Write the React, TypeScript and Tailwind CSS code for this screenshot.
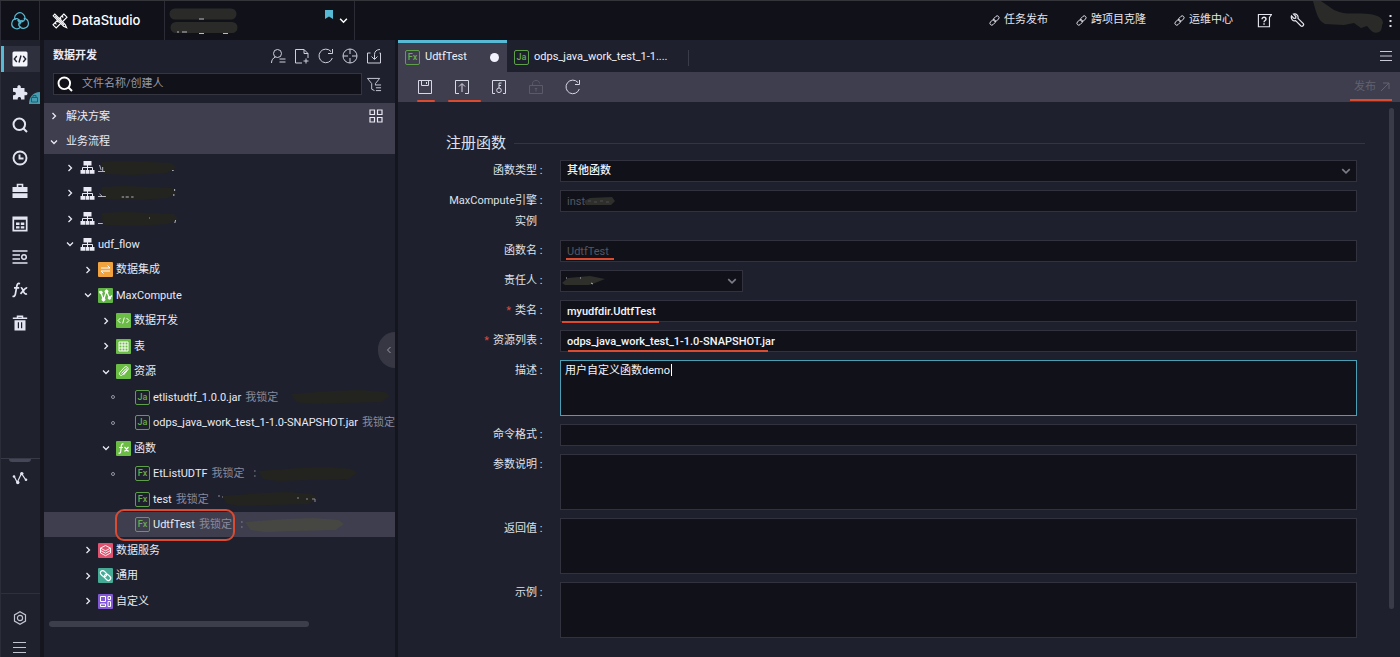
import type { ReactNode } from "react"
import { clsx } from "clsx"

const CYAN = "#57b9d3"

function Svg({ size = 16, box = 16, sw = 1, children }: { size?: number; box?: number; sw?: number; children: ReactNode }) {
  return (
    <svg
      width={size}
      height={size}
      viewBox={`0 0 ${box} ${box}`}
      fill="none"
      stroke="currentColor"
      strokeWidth={sw}
      className="shrink-0"
      aria-hidden="true"
    >
      {children}
    </svg>
  )
}

function Chevron({ open = false, size = 8 }: { open?: boolean; size?: number }) {
  return (
    <Svg size={size} box={8} sw={1.3}>
      <path d={open ? "M1 2.5l3 3 3-3" : "M2.5 1l3 3-3 3"} />
    </Svg>
  )
}

function LinkIcon({ size = 11 }: { size?: number }) {
  return (
    <Svg size={size} box={12} sw={1}>
      <rect x="4.4" y="2" width="7" height="4" rx="2" transform="rotate(-45 7.9 4)" />
      <rect x=".6" y="6" width="7" height="4" rx="2" transform="rotate(-45 4.1 8)" />
    </Svg>
  )
}

/* ---------- top bar ---------- */

const headerLinks = ["任务发布", "跨项目克隆", "运维中心"]
const lobe = "M4.3 8A5 5 0 1 1 12.8 8.8A4.8 4.8 0 0 1 7.2 9.2"

function TopBar() {
  return (
    <header className="flex h-10 shrink-0 items-stretch border-t border-[#34353b] bg-[#111219]">
      <div className="flex w-10 shrink-0 items-center justify-center border-r border-l border-[#2b2c35]">
        <svg width="18" height="18" viewBox="0 0 18 18" fill="none" stroke={CYAN} strokeWidth="1.2" aria-hidden="true">
          {[0, 120, 240].map((deg) => (
            <g key={deg} transform={`rotate(${deg} 9 9.6)`}>
              <path d={lobe} />
              <circle cx="7.2" cy="8.4" r=".9" fill={CYAN} stroke="none" />
            </g>
          ))}
        </svg>
      </div>
      <div className="flex w-[125px] shrink-0 items-center gap-1 border-r border-[#2b2c35] pt-px pl-3 text-white">
        <Svg size={16} box={16} sw={1.1}>
          <path d="M11.8 1L15 4.2 4.2 15 1 11.8z" />
          <path d="M9.8 3l1.5 1.5M7.8 5l1.5 1.5M5 7.8l1.5 1.5M3 9.8l1.5 1.5" />
          <path d="M1.2 2.8l1.6-1.6 10.4 10.4 1.3 2.9-2.9-1.3z" fill="#111219" strokeWidth="1.2" />
          <path d="M3.2 3.2l9 9" />
        </Svg>
        <h1 className="font-[Inter] text-[13px] font-medium">DataStudio</h1>
      </div>
      <button aria-label="切换工作空间" className="relative flex w-[190px] shrink-0 items-center border-r border-[#2b2c35] pl-1 text-white">
        <svg width="70" height="28" viewBox="0 0 70 28" aria-hidden="true">
          <path d="M6 7h56M7 20.5h56" stroke="#2a2a29" strokeWidth="11" strokeLinecap="round" />
          <path d="M30 12h5M8 25h2M13 25h5M30 26.5h5M54 26.5h5" stroke="#b9bac2" />
        </svg>
        <svg width="8" height="9" viewBox="0 0 8 9" className="mb-3 ml-auto" aria-hidden="true">
          <path d="M0 0h8v9L4 6.5 0 9z" fill={CYAN} />
        </svg>
        <span className="mr-1.5 ml-1.5">
          <Chevron open size={9} />
        </span>
      </button>
      <nav className="ml-auto flex items-center gap-7 text-[11px] text-[#e4e5ee]">
        {headerLinks.map((label) => (
          <a key={label} href="#" className="flex items-center gap-1">
            <LinkIcon />
            {label}
          </a>
        ))}
      </nav>
      <div className="ml-6 flex items-center gap-[18px] text-[#e4e5ee]">
        <button aria-label="帮助">
          <Svg size={15} sw={1.2}>
            <path d="M15.5 1.6H1.5v13h11.8V4.8z" />
            <path d="M5.4 6.6c0-2.8 4.2-2.6 4.2 0 0 1.4-2.1 1.4-2.1 3.2M7.5 11v1.4" strokeWidth="1.5" />
          </Svg>
        </button>
        <button aria-label="设置">
          <Svg size={15} sw={1.3}>
            <path d="M1.6 3.2l2.6 2.6 1.8-.3.3-1.8-2.5-2.5c2.8-.9 5.5 1.4 4.7 4.5l5.7 5.6c1.2 1.6-1 3.6-2.5 2.5L6 8.2C3.4 9.2.6 6.4 1.6 3.2z" />
          </Svg>
        </button>
      </div>
      <svg width="74" height="34" viewBox="0 0 74 34" className="ml-1.5" aria-hidden="true">
        <path
          d="M2 0h8l13 9c12 6 25 2 35 4 9 1 14 4 14 9-2 3 0 7-4 9-6 3-9-3-12-6l-6 2-7-5-10 2-19-1C6 19 5 10 2 0z"
          fill="#2a2a28"
        />
      </svg>
      <button aria-label="更多" className="mr-2 ml-1 flex items-center text-[#d6d7e0]">
        <svg width="3" height="14" viewBox="0 0 3 14" fill="currentColor" aria-hidden="true">
          <path d="M.5 1h2v2h-2zM.5 6h2v2h-2zM.5 11h2v2h-2z" />
        </svg>
      </button>
    </header>
  )
}

/* ---------- left rail ---------- */

const railItems: { label: string; icon: ReactNode }[] = [
  {
    label: "数据开发",
    icon: (
      <Svg>
        <rect x=".5" y=".5" width="15" height="15" rx="1.5" fill="#f4f5fb" stroke="none" />
        <path d="M4.8 5L2.3 8l2.5 3M11.2 5l2.5 3-2.5 3M9 4.5l-2 7" stroke="#20222e" strokeWidth="1.4" />
      </Svg>
    ),
  },
  {
    label: "组件",
    icon: (
      <Svg>
        <path
          d="M1 4h4.5C4.3.3 9.7.3 8.7 4H12.5v3.8c4-1 4 4.400 0 3.400V15.500H9c.8-3.500-4-3.500-3.200 0H1v-4.300c3.800.9 3.800-4.200 0-3.300z"
          fill="currentColor"
          stroke="none"
        />
      </Svg>
    ),
  },
  {
    label: "搜索",
    icon: (
      <Svg sw={2}>
        <circle cx="7.3" cy="7.3" r="5.8" />
        <path d="M11.5 11.5l3.5 3.5" />
      </Svg>
    ),
  },
  {
    label: "运行历史",
    icon: (
      <Svg sw={1.9}>
        <circle cx="8" cy="8" r="6.5" />
        <path d="M7.5 4.5v4h4" />
      </Svg>
    ),
  },
  {
    label: "手动任务",
    icon: (
      <Svg>
        <path d="M5.5 4V1.5h5V4" strokeWidth="1.6" />
        <path d="M.5 4h15v5H.5zM.5 10.2h15V15H.5z" fill="currentColor" stroke="none" />
      </Svg>
    ),
  },
  {
    label: "表管理",
    icon: (
      <Svg>
        <path d="M1.3 1.3h13.4v13.4H1.3zM1 3h14" strokeWidth="1.7" />
        <path d="M4 6.5h3.5V9H4zM8.8 6.5h3.5V9H8.8zM4 10.2h3.5v2.3H4zM8.8 10.2h3.5v2.3H8.8z" fill="currentColor" stroke="none" />
      </Svg>
    ),
  },
  {
    label: "公共表",
    icon: (
      <Svg sw={1.5}>
        <path d="M.5 2h15M.5 6h7.5M.5 10h7.5M.5 14h15" />
        <circle cx="12" cy="8" r="2.3" />
      </Svg>
    ),
  },
  {
    label: "函数列表",
    icon: (
      <Svg sw={1.7}>
        <path d="M8 1.8C5.8.8 5.2 2.2 4.8 4.2L3.4 12c-.4 2-1.2 2.7-2.9 2.2M2 5.8h5.2M8.8 6c2.4-1 2.2 7.5 6.2 5.8M15.2 6c-2-.6-3.2 2.4-6.7 5.8" />
      </Svg>
    ),
  },
  {
    label: "回收站",
    icon: (
      <Svg>
        <path d="M.8 3.3h14.4M5.5 3V1.2h5V3" strokeWidth="1.5" />
        <path d="M2.5 5.2h11V15.5h-11zM5.8 7.2v6h1.2v-6zM9 7.2v6h1.2v-6z" fill="currentColor" fillRule="evenodd" stroke="none" />
      </Svg>
    ),
  },
]

function Rail() {
  return (
    <aside className="flex w-10 shrink-0 flex-col items-stretch border-l border-[#2b2d38] bg-[#1f212d] pt-0.5 text-[#e4e5f2]">
      {railItems.map((item, i) => (
        <button key={item.label} aria-label={item.label} className="relative flex h-[33px] items-center">
          <span
            className={clsx(
              "flex h-[26px] w-full items-center justify-center",
              i === 0 ? "border-l-3 border-[#57b9d3] bg-[#2f303d] pr-1" : "pr-0.5"
            )}
          >
            {item.icon}
          </span>
          {i === 1 && (
            <svg width="11" height="12" viewBox="0 0 11 12" className="absolute right-0 bottom-1" aria-hidden="true">
              <path d="M0 12C0 5 4 0 11 0v12z" fill="#469db2" />
              <path d="M2.5 5.5h6v4.5h-6zM4 5.5V3.5h3v2" fill="none" stroke="#21606e" />
            </svg>
          )}
        </button>
      ))}
      <div className="mt-auto flex h-[135px] flex-col items-center border-t border-[#383a48] pr-0.5">
        <span className="h-[3px] w-[22px] rounded-b bg-[#454657]" />
        <button aria-label="血缘" className="mt-2">
          <Svg sw={1.2}>
            <path d="M2 6l3.2 6.5L9.500 3.500l4 6" />
            <g fill="currentColor" stroke="none">
              <circle cx="2" cy="6.5" r="1.3" />
              <circle cx="5.8" cy="12.5" r="1.7" />
              <circle cx="9.8" cy="3.6" r="1.7" />
              <circle cx="14" cy="9.8" r="1.3" />
            </g>
          </Svg>
        </button>
      </div>
      <div className="flex h-16 shrink-0 flex-col items-center gap-4 border-t border-[#2e303c] pt-[17px] pr-0.5 text-[#c3c4d1]">
        <button aria-label="偏好设置">
          <Svg size={14} box={14} sw={1.2}>
            <path d="M7 .8l5.5 3.1v6.2L7 13.2l-5.5-3.1V3.9z" />
            <circle cx="7" cy="7" r="2.6" />
          </Svg>
        </button>
        <button aria-label="展开菜单">
          <Svg size={13} box={13} sw={1.2}>
            <path d="M0 1.5h13M0 6.5h13M0 11.5h13" />
          </Svg>
        </button>
      </div>
    </aside>
  )
}

/* ---------- resource tree ---------- */

type IconKind = "flow" | "di" | "mc" | "code" | "table" | "clip" | "fn" | "svc" | "common" | "custom" | "Ja" | "Fx"

type Node = {
  label: string
  level: 1 | 2 | 3 | 4
  icon: IconKind
  state?: "open" | "closed" | "dot"
  locked?: boolean
  masked?: number
  marks?: string
  selected?: boolean
}

const nodes: Node[] = [
  { label: "", level: 1, icon: "flow", state: "closed", masked: 78, marks: "M0 11.5h9M2 5l2 5M6 7v4M95 10.5h2" },
  { label: "", level: 1, icon: "flow", state: "closed", masked: 79, marks: "M0 11.5h10M2 9l3 2M30 12h3M35 12h4M42 12h3M97 4v2M96 9v2" },
  { label: "", level: 1, icon: "flow", state: "closed", masked: 80, marks: "M0 12.5h6M64 7h1M97 9l-1 3" },
  { label: "udf_flow", level: 1, icon: "flow", state: "open" },
  { label: "数据集成", level: 2, icon: "di", state: "closed" },
  { label: "MaxCompute", level: 2, icon: "mc", state: "open" },
  { label: "数据开发", level: 3, icon: "code", state: "closed" },
  { label: "表", level: 3, icon: "table", state: "closed" },
  { label: "资源", level: 3, icon: "clip", state: "open" },
  { label: "etlistudtf_1.0.0.jar", level: 4, icon: "Ja", state: "dot", locked: true, masked: 104 },
  { label: "odps_java_work_test_1-1.0-SNAPSHOT.jar", level: 4, icon: "Ja", state: "dot", locked: true },
  { label: "函数", level: 3, icon: "fn", state: "open" },
  { label: "EtListUDTF", level: 4, icon: "Fx", state: "dot", locked: true, masked: 104, marks: "M1 5h1.5M1 10h1.5" },
  { label: "test", level: 4, icon: "Fx", locked: true, masked: 100, marks: "M1 5h2M5 6h1M80 7h2M89 8h2M95 8h3v3" },
  { label: "UdtfTest", level: 4, icon: "Fx", locked: true, masked: 104, marks: "M1 5h1.5M1 10h1.5", selected: true },
  { label: "数据服务", level: 2, icon: "svc", state: "closed" },
  { label: "通用", level: 2, icon: "common", state: "closed" },
  { label: "自定义", level: 2, icon: "custom", state: "closed" },
]

const indent = { 1: "pl-[22px]", 2: "pl-10", 3: "pl-[58px]", 4: "pl-[66px]" }

const tiles: Partial<Record<IconKind, { fill: string; glyph: ReactNode }>> = {
  di: { fill: "#f0a33f", glyph: <path d="M3 6h9L9.5 3.5M12 9H3l2.5 2.5" /> },
  mc: {
    fill: "#62b446",
    glyph: (
      <g>
        <path d="M1 3.5l2 1L5.5 12 8.5 3l3 7L14 7.5" strokeWidth="1.3" />
        <circle cx="3" cy="4.5" r="1.3" fill="#fff" />
        <circle cx="5.5" cy="11.5" r="1.5" fill="#fff" />
        <circle cx="8.5" cy="3.5" r="1.5" fill="#fff" />
        <circle cx="11.5" cy="10" r="1.3" fill="#fff" />
      </g>
    ),
  },
  code: { fill: "#6cbd45", glyph: <path d="M4.5 5L2 7.5 4.5 10M10.5 5L13 7.5 10.5 10M8.3 4.5l-1.6 6" /> },
  table: { fill: "#6cbd45", glyph: <path d="M3 3h9v9H3zM3 6h9M3 9h9M6 3v9M9 3v9" /> },
  clip: {
    fill: "#6cbd45",
    glyph: <path d="M5.5 9.5l4-4.5c1-1 2 0 1.2 1L6.5 10.8c-1.6 1.7-4.2-.5-2.7-2.3l4.4-5c2-2.2 5.3.4 3.4 2.7L7.5 11" />,
  },
  fn: {
    fill: "#6cbd45",
    glyph: <path d="M7.5 3c-1.8-.5-2 .8-2.2 2L4.7 10.5c-.2 1.6-.8 2-2.2 1.5M3.2 6.5H7M8.5 6l4 4.5M12.5 6l-4 4.5" strokeWidth="1.2" />,
  },
  svc: {
    fill: "#e0526f",
    glyph: <path d="M7.5 2.5l5 2.6-5 2.7-5-2.7zM2.5 7.5l5 2.7 5-2.7M2.5 10l5 2.7 5-2.7M2.5 5v5M12.5 5v5" strokeWidth=".9" />,
  },
  common: {
    fill: "#45ab97",
    glyph: (
      <g strokeWidth="1.2">
        <rect x="2" y="3.4" width="7" height="4.6" rx="2.3" transform="rotate(45 5.5 5.7)" />
        <rect x="6" y="7" width="7" height="4.6" rx="2.3" transform="rotate(45 9.5 9.3)" />
      </g>
    ),
  },
  custom: { fill: "#8258d6", glyph: <path d="M2.5 2.5h5v5h-5zM10 2.5h2.5v3H10zM10 7.5h2.5v5H10zM2.5 10h5v2.5h-5z" /> },
}

function FileBadge({ kind }: { kind: "Ja" | "Fx" }) {
  return (
    <span className="flex size-[15px] shrink-0 items-center justify-center rounded-xs border border-[#5f9f49] text-[9px] leading-none font-medium text-[#68ac4f]">
      {kind}
    </span>
  )
}

function NodeIcon({ kind }: { kind: IconKind }) {
  if (kind === "Ja" || kind === "Fx") return <FileBadge kind={kind} />
  if (kind === "flow") {
    return (
      <Svg size={15} box={15} sw={1}>
        <path d="M7.5 5v5M2.5 10V7.5h10V10" />
        <path d="M3.5 1h8v4.5h-8zM.5 10H5v3.8H.5zM5.5 10h4v3.8h-4zM10 10h4.5v3.8H10z" fill="currentColor" stroke="none" />
      </Svg>
    )
  }
  const tile = tiles[kind]
  if (!tile) return null
  return (
    <svg width="15" height="15" viewBox="0 0 15 15" fill="none" stroke="#fff" className="shrink-0" aria-hidden="true">
      <rect width="15" height="15" rx="1" fill={tile.fill} stroke="none" />
      {tile.glyph}
    </svg>
  )
}

function Mask({ node, width }: { node: Node; width: number }) {
  return (
    <svg width={width} height="16" viewBox="0 0 100 16" preserveAspectRatio="none" className="shrink-0" aria-hidden="true">
      <path
        d={
          node.locked
            ? "M5 5l40-3 25-1 25 2 5 4-8 6-38 1-30 1-14-2z"
            : "M4 2l30-1 30 1 30 1 6 5-12 5-40 2-40-1L6 11z"
        }
        fill={node.selected ? "#464742" : "#23241f"}
      />
      {node.marks && <path d={node.marks} fill="none" stroke={node.locked ? "#8a8c98" : "#c8c9d4"} />}
    </svg>
  )
}

function TreeRow({ node }: { node: Node }) {
  return (
    <li
      className={clsx("relative flex h-[25px] items-center even:h-[26px]", node.selected && "bg-[#3e3e4f]", indent[node.level])}
    >
      <button className="flex items-center whitespace-nowrap">
        <span className={clsx("mr-1.5 shrink-0", node.level === 4 ? "w-[19px]" : "w-2")}>
          {node.state === "dot" && <span className="ml-px block size-1 rounded-full border border-[#9495a2]" />}
          {(node.state === "open" || node.state === "closed") && <Chevron open={node.state === "open"} />}
        </span>
        <NodeIcon kind={node.icon} />
        <span className="ml-[3px] pt-0.5">{node.label}</span>
        {node.locked && <span className="ml-1 pt-0.5 text-[#878a9d]">我锁定</span>}
        {node.masked && (
          <span className={node.locked ? "ml-2" : ""}>
            <Mask node={node} width={node.masked} />
          </span>
        )}
      </button>
      {node.selected && (
        <span className="pointer-events-none absolute -top-[3px] left-[71px] h-8 w-[120px] rounded-[9px] border-2 border-[#dc4a30]" />
      )}
    </li>
  )
}

function RefreshGlyph() {
  return (
    <Svg>
      <path d="M14.3 10A6.8 6.8 0 1 1 13 3.5M14.5 1v4.500H10" />
    </Svg>
  )
}

const panelActions: { label: string; icon: ReactNode }[] = [
  {
    label: "只看我的",
    icon: (
      <Svg>
        <circle cx="7.5" cy="5.5" r="4" />
        <path d="M5.5 9C3 10 1.5 12 1.5 15M9.5 11h6M9.5 14h6" />
      </Svg>
    ),
  },
  {
    label: "新建",
    icon: (
      <Svg>
        <path d="M8 15H1.5V1.5H10l4 4v4.5M10 1.5v4h4M12 10.5v5M9.5 13h5" />
      </Svg>
    ),
  },
  { label: "刷新", icon: <RefreshGlyph /> },
  {
    label: "定位",
    icon: (
      <Svg>
        <circle cx="8" cy="8" r="7" />
        <path d="M8 1v5M8 10v5M1 8h5M10 8h5" />
      </Svg>
    ),
  },
  {
    label: "导入",
    icon: (
      <Svg>
        <path d="M4.5 5H1.5v10h13V5h-1M14 1.5c-3.5 0-5.5 2-5.5 5V11M5.5 8.5l3 3 3-3" />
      </Svg>
    ),
  },
]

function TreePanel() {
  return (
    <section className="relative flex w-[351px] shrink-0 flex-col bg-[#1e202d] text-[11px] text-[#e9eaf4]">
      <div className="flex h-8 items-center justify-between pr-[13px] pl-[9px]">
        <h2 className="font-bold">数据开发</h2>
        <div className="flex gap-2 text-[#cfd0dc]">
          {panelActions.map((a) => (
            <button key={a.label} aria-label={a.label}>
              {a.icon}
            </button>
          ))}
        </div>
      </div>
      <div className="mt-px flex items-center pr-[13px] pl-[9px]">
        <label className="flex h-[22px] flex-1 items-center border border-[#34353f] bg-[#111219] pl-[3px] text-white">
          <Svg size={16} sw={1.9}>
            <circle cx="7.3" cy="7.3" r="5.8" />
            <path d="M11.5 11.5l3.5 3.5" />
          </Svg>
          <input
            aria-label="文件名称/创建人"
            placeholder="文件名称/创建人"
            className="ml-[9px] min-w-0 flex-1 bg-transparent pt-px outline-none placeholder:text-[#9698a8]"
          />
        </label>
        <button aria-label="筛选" className="ml-[5px] text-[#cfd0dc]">
          <Svg size={15}>
            <path d="M.5 1.5h13L9 7v2M.5 1.5L5 7v6l3 1.5M9.5 8.5h5.5M9.5 11.5h5.5M9.5 14.5h5.5" />
          </Svg>
        </button>
      </div>
      <div className="mt-2 bg-[#3e3e4f] text-[#e9eaf4]">
        <button className="flex h-[26px] w-full items-center pr-3 pl-1.5">
          <Chevron />
          <span className="ml-2 pt-0.5">解决方案</span>
          <span className="ml-auto">
            <Svg size={14} box={14} sw={1.2}>
              <path d="M1 1h4.5v4.5H1zM8.5 1H13v4.500H8.500zM1 8.500h4.500V13H1zM8.500 8.500H13V13H8.500z" />
            </Svg>
          </span>
        </button>
        <button className="flex h-[25px] w-full items-center pl-1.5">
          <Chevron open />
          <span className="ml-2 pt-0.5">业务流程</span>
        </button>
      </div>
      <ul className="mt-px">
        {nodes.map((node, i) => (
          <TreeRow key={i} node={node} />
        ))}
      </ul>
      <div className="mt-[7px] ml-[5px] h-1.5 w-[260px] rounded-full bg-[#3d3e4b]" />
      <button
        aria-label="收起面板"
        className="absolute top-[292px] right-0 flex h-9 w-[17px] items-center justify-center rounded-l-full bg-[#363743] pl-1 text-[#9a9ba7]"
      >
        <Svg size={8} box={8}>
          <path d="M5.5 1l-3 3 3 3" />
        </Svg>
      </button>
    </section>
  )
}

/* ---------- editor ---------- */

function ToolButton({ label, mark, disabled, children }: { label: string; mark?: string; disabled?: boolean; children: ReactNode }) {
  return (
    <button aria-label={label} disabled={disabled} className="relative text-[#d7d8e6] disabled:text-[#5a5a69]">
      {children}
      {mark && <span className={clsx("absolute top-[21px] h-0.5 rounded-full bg-[#dc4a30]", mark)} />}
    </button>
  )
}

function EditorHead() {
  return (
    <>
      <div className="flex h-8 items-stretch text-[11px] text-[#eff0f8]">
        <div className="flex w-[109px] items-center border-t-3 border-[#57b9d3] bg-[#3e3e4f] pr-2 pl-[7px]">
          <FileBadge kind="Fx" />
          <span className="ml-[5px]">UdtfTest</span>
          <span className="ml-auto size-[9px] rounded-full bg-[#f0f1fa]" />
        </div>
        <div className="flex items-center pt-[3px] pl-[7px]">
          <FileBadge kind="Ja" />
          <span className="ml-[5px] w-[154px]">odps_java_work_test_1-1....</span>
          <span className="h-4 w-px bg-[#3b3c49]" />
        </div>
        <button aria-label="标签列表" className="mr-2 ml-auto text-[#c9cad5]">
          <Svg size={12} box={12} sw={1.2}>
            <path d="M0 1.5h12M0 6h12M0 10.5h12" />
          </Svg>
        </button>
      </div>
      <div className="flex h-[30px] items-center bg-[#3e3e4f] pr-2.5 pl-[19px]">
        <div className="flex gap-[21px]">
          <ToolButton label="保存" mark="left-0 w-[18px]">
            <Svg>
              <path d="M1.5 1.5h13v13h-13zM4.5 1.5v5h7v-5M9.5 3v2" />
            </Svg>
          </ToolButton>
          <ToolButton label="提交" mark="-left-[6px] w-[33px]">
            <Svg>
              <path d="M5 14.5H1.5v-13h13v13H11M8 13V5M5 7.5l3-3 3 3" />
            </Svg>
          </ToolButton>
          <ToolButton label="提交并解锁">
            <Svg>
              <path d="M4 14.5H1.5v-13h13v13H12M8 9V4h2.5M8 6.5h2" />
              <circle cx="8" cy="11.3" r="2.3" />
            </Svg>
          </ToolButton>
          <ToolButton label="偷锁编辑" disabled>
            <Svg>
              <path d="M1.5 6.5h13v8h-13zM4.5 6.5V4.5c0-4 7-4 7 0M8 9.5v3M6.8 9.5h2.4" />
            </Svg>
          </ToolButton>
          <ToolButton label="重新加载">
            <RefreshGlyph />
          </ToolButton>
        </div>
        <button disabled className="relative ml-auto flex items-center gap-1 text-[11px] text-[#62626f]">
          发布
          <Svg size={10} box={10}>
            <path d="M1 9l8-8M3 1h6v6" />
          </Svg>
          <span className="absolute top-[20px] -left-1 h-0.5 w-[42px] bg-[#dc4a30]" />
        </button>
      </div>
    </>
  )
}

const field =
  "block h-[22px] w-full appearance-none rounded-none border border-[#31323e] bg-[#111219] px-1.5 text-[11px] text-[#f4f5fb] outline-none disabled:text-[#545662]"
const area =
  "block h-14 w-full resize-none border bg-[#111219] px-1 py-0.5 text-[11px] leading-4 text-[#f4f5fb] outline-none"

function Row({ id, label, tail, required, children }: { id: string; label: string; tail?: string; required?: boolean; children: ReactNode }) {
  return (
    <div className="flex">
      <label htmlFor={id} className="w-[115px] shrink-0 pr-[15px] text-right leading-[21px] whitespace-nowrap">
        {required && <span className="mr-1 text-[#dc4a45]">*</span>}
        {label}
        <span className="inline-block w-2 text-center">:</span>
        {tail && <span className="block pr-2">{tail}</span>}
      </label>
      <div className="relative min-w-0 flex-1">{children}</div>
    </div>
  )
}

function Underline({ className }: { className: string }) {
  return <span className={clsx("pointer-events-none absolute h-0.5 bg-[#dc4a30]", className)} />
}

function SelectArrow() {
  return (
    <span className="pointer-events-none absolute top-1.5 right-1.5 text-[#7b7c88]">
      <Chevron open size={10} />
    </span>
  )
}

function FunctionForm() {
  return (
    <form className="min-w-0 flex-1 pt-8 text-[11px] text-[#dfe0ea]">
      <div className="flex items-center pl-12">
        <h2 className="text-[15px] leading-[18px]">注册函数</h2>
        <span className="mr-6 ml-2 h-px flex-1 bg-[#34353f]" />
      </div>
      <div className="mt-2 mr-8 ml-[47px] flex flex-col gap-2">
        <Row id="fnType" label="函数类型">
          <select id="fnType" className={clsx(field, "font-medium")}>
            <option>其他函数</option>
          </select>
          <SelectArrow />
        </Row>
        <Row id="engine" label="MaxCompute引擎" tail="实例">
          <input id="engine" disabled defaultValue="inst" className={field} />
          <svg width="32" height="10" viewBox="0 0 32 10" className="absolute top-1.5 left-6" aria-hidden="true">
            <path d="M0 5l6-3 22-1 3 4-4 4-25 0z" fill="#2e2e2b" />
            <path d="M4 5h3M10 6h3M16 5h3M22 6h3" stroke="#4b4c52" />
          </svg>
        </Row>
        <Row id="fnName" label="函数名">
          <input id="fnName" disabled defaultValue="UdtfTest" className={field} />
          <Underline className="top-[18px] left-1.5 w-12" />
        </Row>
        <Row id="owner" label="责任人">
          <div className="relative w-[183px]">
            <select id="owner" className={field}>
              <option></option>
            </select>
            <svg width="44" height="10" viewBox="0 0 44 10" className="absolute top-1.5 left-0.5" aria-hidden="true">
              <path d="M0 7l6-5 22-2 15 3-10 4-6 2-24 0z" fill="#2e2e2b" />
              <path d="M4 2h1M18 2h1M29 7l2 1" stroke="#b5b6bf" />
            </svg>
            <SelectArrow />
          </div>
        </Row>
        <Row id="className" label="类名" required>
          <input id="className" defaultValue="myudfdir.UdtfTest" className={clsx(field, "font-medium")} />
          <Underline className="top-[21px] left-0.5 w-[97px]" />
        </Row>
        <Row id="resources" label="资源列表" required>
          <input id="resources" defaultValue="odps_java_work_test_1-1.0-SNAPSHOT.jar" className={clsx(field, "font-medium")} />
          <Underline className="top-5 left-2 w-[200px]" />
        </Row>
        <Row id="desc" label="描述">
          <textarea id="desc" defaultValue="用户自定义函数demo" className={clsx(area, "border-[#4a9fb4]")} />
          <span className="pointer-events-none absolute top-1 left-[111px] h-3 w-px bg-white" />
        </Row>
        <Row id="command" label="命令格式">
          <input id="command" className={field} />
        </Row>
        <Row id="params" label="参数说明">
          <textarea id="params" className={clsx(area, "border-[#31323e]")} />
        </Row>
        <Row id="returns" label="返回值">
          <textarea id="returns" className={clsx(area, "border-[#31323e]")} />
        </Row>
        <Row id="sample" label="示例">
          <textarea id="sample" className={clsx(area, "border-[#31323e]")} />
        </Row>
      </div>
    </form>
  )
}

export default function App() {
  return (
    <div className="flex h-screen flex-col overflow-hidden bg-[#14151d] font-[Roboto,'Noto_Sans_CJK_SC',sans-serif]">
      <TopBar />
      <div className="flex min-h-0 flex-1">
        <Rail />
        <div className="w-1 shrink-0" />
        <TreePanel />
        <main className="ml-[3px] flex min-w-0 flex-1 flex-col bg-[#1e212d]">
          <EditorHead />
          <div className="flex min-h-0 flex-1 pr-1.5">
            <FunctionForm />
            <div className="mt-1.5 mb-12 w-[5px] rounded-full bg-[#3a3b49]" />
          </div>
        </main>
      </div>
    </div>
  )
}
